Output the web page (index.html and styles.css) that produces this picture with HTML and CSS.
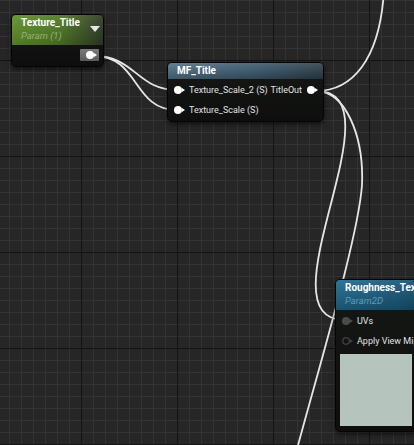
FILE: index.html
```html
<!DOCTYPE html>
<html lang="en">
<head>
    <meta charset="UTF-8">
    <title>Material Graph</title>
    <link rel="stylesheet" href="styles.css">
</head>
<body>
    <div class="graph">
        <svg class="wires" width="414" height="445" viewBox="0 0 414 445">
            <path d="M94,56 C135,56 137,90 177,90"/>
            <path d="M94,56 C140,56 132,110 177,110"/>
            <path d="M316,91 C352,91 380,60 384,-10"/>
            <path d="M316,91 C404,91 257,320 345,320"/>
            <path d="M316,91 C345,91 364,135 362,185 C358,240 315,380 290,475"/>
        </svg>

        <div class="node node-param" style="left: 11px; top: 14px; width: 93px;">
            <div class="node-header header-green">
                <div class="node-title">Texture_Title</div>
                <div class="node-sub">Param (1)</div>
                <span class="collapse-arrow"></span>
            </div>
            <div class="node-body out-only">
                <div class="out-box"><span class="pin"></span></div>
            </div>
        </div>

        <div class="node" style="left: 167px; top: 62px; width: 157px;">
            <div class="node-header header-func">
                <div class="node-title">MF_Title</div>
            </div>
            <div class="node-body">
                <div class="pin-row">
                    <span class="pin"></span>
                    <span class="pin-label">Texture_Scale_2 (S)</span>
                    <span class="pin-label out-label">TitleOut</span>
                    <span class="pin"></span>
                </div>
                <div class="pin-row">
                    <span class="pin"></span>
                    <span class="pin-label">Texture_Scale (S)</span>
                </div>
            </div>
        </div>

        <div class="node node-texture" style="left: 335px; top: 279px; width: 110px;">
            <div class="node-header header-blue">
                <div class="node-title">Roughness_Texture</div>
                <div class="node-sub sub-blue">Param2D</div>
            </div>
            <div class="node-body">
                <div class="pin-row">
                    <span class="pin pin-grey"></span>
                    <span class="pin-label">UVs</span>
                </div>
                <div class="pin-row">
                    <span class="pin pin-empty"></span>
                    <span class="pin-label">Apply View MipBias</span>
                </div>
                <div class="preview"></div>
            </div>
        </div>
    </div>
</body>
</html>
```

FILE: styles.css
```css
body {
    margin: 0;
    background-color: #262626;
    font-family: Roboto, "Liberation Sans", sans-serif;
}

.graph {
    position: relative;
    width: 414px;
    height: 445px;
    overflow: hidden;
    background-color: #262626;
    background-image:
        linear-gradient(90deg, #141414 1px, transparent 1px),
        linear-gradient(180deg, #141414 1px, transparent 1px),
        linear-gradient(90deg, #343434 1px, transparent 1px),
        linear-gradient(180deg, #343434 1px, transparent 1px);
    background-size: 96px 96px, 96px 96px, 12px 12px, 12px 12px;
    background-position: 81px 0, 0 60px, 9px 0, 0 0;
}

.wires {
    position: absolute;
    left: 0;
    top: 0;
}

.wires path {
    fill: none;
    stroke: #e6e6e6;
    stroke-width: 1.8;
}

.node {
    position: absolute;
    background: linear-gradient(180deg, #161816, #0d0e0d);
    border: 1px solid #050505;
    border-radius: 5px;
    box-shadow: 0 2px 5px rgba(0, 0, 0, 0.6);
    box-sizing: border-box;
    overflow: hidden;
}

.node-header {
    position: relative;
    padding: 2px 9px 2px;
    height: 16px;
    box-sizing: border-box;
}

.node-param .node-header,
.node-texture .node-header {
    height: 30px;
    padding-top: 2px;
}

.header-green {
    background: linear-gradient(180deg, rgba(255, 255, 255, 0.08), rgba(0, 0, 0, 0.15)),
        linear-gradient(90deg, #5f9029 0%, #4f7b24 50%, #2f3a25 100%);
}

.header-func {
    background: linear-gradient(180deg, rgba(255, 255, 255, 0.12), rgba(0, 0, 0, 0.2)),
        linear-gradient(90deg, #4d6e84 0%, #3b586b 55%, #2a3c48 100%);
}

.header-blue {
    background: linear-gradient(180deg, rgba(255, 255, 255, 0.08), rgba(0, 0, 0, 0.2)),
        linear-gradient(90deg, #20698d 0%, #18587a 60%, #123f57 100%);
}

.node-title {
    color: #fff;
    font-size: 10px;
    font-weight: bold;
    line-height: 12px;
    white-space: nowrap;
}

.node-sub {
    color: #98b077;
    font-size: 9.5px;
    font-style: italic;
    line-height: 13px;
    white-space: nowrap;
}

.sub-blue {
    color: #5d9cb6;
}

.collapse-arrow {
    position: absolute;
    right: 3px;
    top: 11px;
    width: 0;
    height: 0;
    border-left: 5px solid transparent;
    border-right: 5px solid transparent;
    border-top: 6px solid #e8e8e8;
}

.node-body {
    padding: 1px 0 1px 6px;
}

.out-only {
    display: flex;
    justify-content: flex-end;
    padding: 4px 4px 5px 0;
}

.out-box {
    display: flex;
    align-items: center;
    padding-left: 6px;
    width: 19px;
    height: 12px;
    box-sizing: border-box;
    background: linear-gradient(180deg, #7a7a7a, #5a5a5a);
    border-radius: 1px;
}

.pin-row {
    display: flex;
    align-items: center;
    height: 20px;
    padding-right: 8px;
}

.pin {
    position: relative;
    flex: none;
    width: 8px;
    height: 8px;
    border-radius: 50%;
    background: #fff;
}

.pin::after {
    content: "";
    position: absolute;
    right: -3px;
    top: 2px;
    border-left: 3px solid #fff;
    border-top: 2px solid transparent;
    border-bottom: 2px solid transparent;
}

.pin-grey {
    background: #4b4b4b;
}

.pin-grey::after {
    border-left-color: #4b4b4b;
}

.pin-empty {
    background: #111;
    box-shadow: inset 0 0 0 1.5px #3c3c3c;
}

.pin-empty::after {
    border-left-color: #3c3c3c;
}

.pin-label {
    color: #e2e2e2;
    font-size: 9px;
    margin-left: 7px;
    white-space: nowrap;
}

.out-label {
    margin-left: auto;
    margin-right: 5px;
}

.preview {
    margin: 3px 0 4px -2px;
    width: 72px;
    height: 72px;
    background: #b5c5bd;
}
```
